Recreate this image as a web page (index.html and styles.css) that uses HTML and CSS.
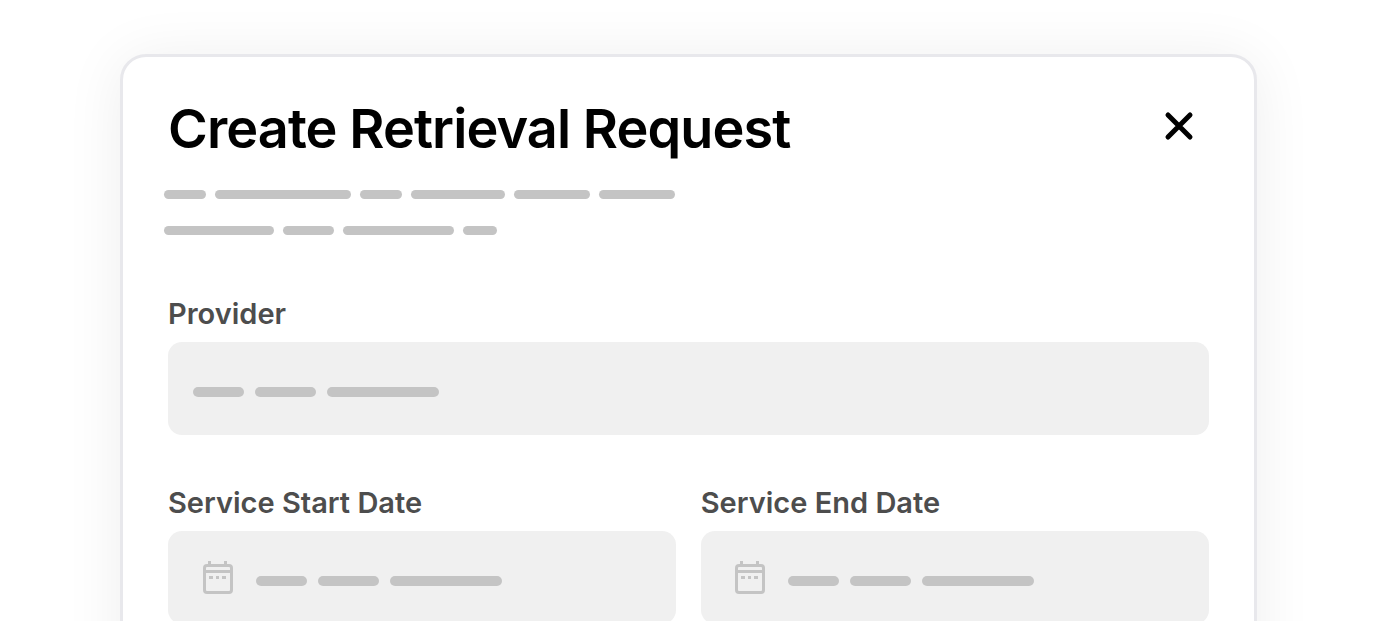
FILE: index.html
```html
<!DOCTYPE html>
<html lang="en">
<head>
    <meta charset="UTF-8">
    <meta name="viewport" content="width=device-width, initial-scale=1.0">
    <title>Create Retrieval Request</title>
    <link rel="stylesheet" href="styles.css">
</head>
<body>
    <div class="modal">
        <div class="modal-header">
            <h1>Create Retrieval Request</h1>
            <button type="button" class="close-btn" aria-label="Close">
                <svg width="30" height="30" viewBox="0 0 30 30" fill="none" stroke="#000" stroke-width="5" stroke-linecap="round">
                    <path d="M4 4L26 26M26 4L4 26"/>
                </svg>
            </button>
        </div>

        <!-- Redacted description -->
        <div class="description">
            <div class="bar-row">
                <span class="bar w42"></span>
                <span class="bar w136"></span>
                <span class="bar w42"></span>
                <span class="bar w94"></span>
                <span class="bar w76"></span>
                <span class="bar w76"></span>
            </div>
            <div class="bar-row">
                <span class="bar w110"></span>
                <span class="bar w51"></span>
                <span class="bar w111"></span>
                <span class="bar w34"></span>
            </div>
        </div>

        <div class="form-group">
            <label>Provider</label>
            <div class="field field-provider">
                <span class="bar w51"></span>
                <span class="bar w61"></span>
                <span class="bar w112"></span>
            </div>
        </div>

        <div class="form-row">
            <div class="form-group">
                <label>Service Start Date</label>
                <div class="field field-date">
                    <svg class="cal-icon" width="30" height="33" viewBox="0 0 30 33" fill="none" stroke="#c4c4c4" stroke-width="3">
                        <rect x="1.5" y="4.5" width="27" height="27" rx="2.5"/>
                        <path d="M1.5 10.5H28.5M6.5 0V5M22.5 0V5"/>
                        <path d="M6 16.5H10M13 16.5H16M19 16.5H23"/>
                    </svg>
                    <span class="bar w51"></span>
                    <span class="bar w61"></span>
                    <span class="bar w112"></span>
                </div>
            </div>
            <div class="form-group">
                <label>Service End Date</label>
                <div class="field field-date">
                    <svg class="cal-icon" width="30" height="33" viewBox="0 0 30 33" fill="none" stroke="#c4c4c4" stroke-width="3">
                        <rect x="1.5" y="4.5" width="27" height="27" rx="2.5"/>
                        <path d="M1.5 10.5H28.5M6.5 0V5M22.5 0V5"/>
                        <path d="M6 16.5H10M13 16.5H16M19 16.5H23"/>
                    </svg>
                    <span class="bar w51"></span>
                    <span class="bar w61"></span>
                    <span class="bar w112"></span>
                </div>
            </div>
        </div>
    </div>
</body>
</html>
```

FILE: styles.css
```css
html, body {
    height: 621px;
    margin: 0;
    overflow: hidden;
    background-color: #fff;
    font-family: Inter, "Liberation Sans", sans-serif;
}
.modal {
    box-sizing: border-box;
    width: 1137px;
    height: 700px;
    margin: 54px 0 0 120px;
    padding: 39px 45px 0;
    background-color: #fff;
    border: 3px solid #e8e8ec;
    border-radius: 26px;
    box-shadow: 0 4px 60px rgba(0, 0, 0, 0.07);
}
.modal-header {
    display: flex;
    justify-content: space-between;
    align-items: center;
    height: 66px;
}
.modal-header h1 {
    margin: 0;
    font-size: 54px;
    font-weight: 600;
    line-height: 66px;
    letter-spacing: -0.9px;
    color: #000;
}
.close-btn {
    display: flex;
    margin: -6px 15px 0 0;
    padding: 0;
    background: none;
    border: none;
    cursor: pointer;
}
.description {
    display: flex;
    flex-direction: column;
    gap: 27px;
    margin: 28px 0 0 -4px;
}
.bar-row {
    display: flex;
    gap: 9px;
}
.bar {
    display: block;
    height: 9px;
    background-color: #c4c4c4;
    border-radius: 5px;
}
.w34 { width: 34px; }
.w42 { width: 42px; }
.w51 { width: 51px; }
.w61 { width: 61px; }
.w76 { width: 76px; }
.w94 { width: 94px; }
.w110 { width: 110px; }
.w111 { width: 111px; }
.w112 { width: 112px; }
.w136 { width: 136px; }
.form-group {
    flex: 1;
    min-width: 0;
    margin-top: 62px;
}
.form-group label {
    display: block;
    margin-bottom: 11px;
    font-size: 29px;
    font-weight: 600;
    line-height: 34px;
    color: #4d4d4d;
}
.field {
    display: flex;
    align-items: center;
    gap: 11px;
    height: 93px;
    background-color: #f0f0f0;
    border-radius: 14px;
}
.field .bar {
    height: 10px;
    margin-top: 6px;
}
.field-provider {
    padding-left: 25px;
}
.field-date {
    padding-left: 34.5px;
}
.cal-icon {
    margin-right: 12px;
}
.form-row {
    display: flex;
    gap: 24.5px;
    margin-top: 51px;
}
.form-row .form-group {
    margin-top: 0;
}
```
